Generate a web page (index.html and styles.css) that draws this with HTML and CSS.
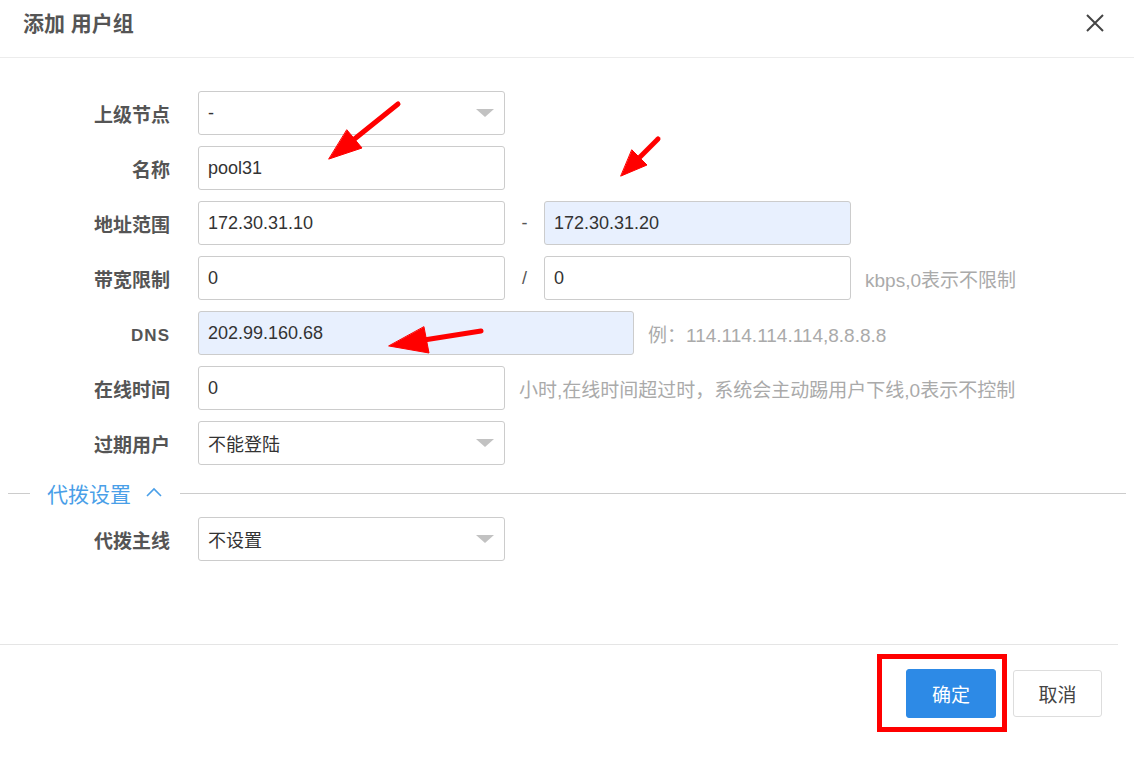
FILE: index.html
```html
<!DOCTYPE html>
<html lang="zh-CN">
<head>
    <meta charset="UTF-8">
    <meta name="viewport" content="width=device-width, initial-scale=1.0">
    <title>添加 用户组</title>
    <link rel="stylesheet" href="styles.css">
</head>
<body>
    <div class="dialog">
        <div class="dialog-header">
            <span class="dialog-title">添加 用户组</span>
            <svg class="close" width="20" height="20" viewBox="0 0 20 20">
                <path d="M2 2 L18 18 M18 2 L2 18" stroke="#444" stroke-width="2" fill="none"/>
            </svg>
        </div>

        <div class="dialog-body">
            <div class="form-row">
                <label class="form-label">上级节点</label>
                <div class="select"><span>-</span><i class="caret"></i></div>
            </div>
            <div class="form-row">
                <label class="form-label">名称</label>
                <input class="field" type="text" value="pool31">
            </div>
            <div class="form-row">
                <label class="form-label">地址范围</label>
                <input class="field" type="text" value="172.30.31.10">
                <span class="sep">-</span>
                <input class="field filled" type="text" value="172.30.31.20">
            </div>
            <div class="form-row">
                <label class="form-label">带宽限制</label>
                <input class="field" type="text" value="0">
                <span class="sep">/</span>
                <input class="field" type="text" value="0">
                <span class="hint">kbps,0表示不限制</span>
            </div>
            <div class="form-row">
                <label class="form-label label-latin">DNS</label>
                <input class="field field-wide filled" type="text" value="202.99.160.68">
                <span class="hint">例：114.114.114.114,8.8.8.8</span>
            </div>
            <div class="form-row">
                <label class="form-label">在线时间</label>
                <input class="field" type="text" value="0">
                <span class="hint">小时,在线时间超过时，系统会主动踢用户下线,0表示不控制</span>
            </div>
            <div class="form-row">
                <label class="form-label">过期用户</label>
                <div class="select"><span>不能登陆</span><i class="caret"></i></div>
            </div>

            <div class="section-divider">
                <span class="line-short"></span>
                <span class="section-title">代拨设置</span>
                <svg class="chevron" width="16" height="10" viewBox="0 0 16 10">
                    <polyline points="1,9 8,2 15,9" stroke="#4a9fe8" stroke-width="1.6" fill="none"/>
                </svg>
                <span class="line-long"></span>
            </div>

            <div class="form-row">
                <label class="form-label">代拨主线</label>
                <div class="select"><span>不设置</span><i class="caret"></i></div>
            </div>
        </div>

        <div class="dialog-footer">
            <button class="btn btn-primary">确定</button>
            <button class="btn">取消</button>
        </div>
    </div>

    <!-- annotation marks over the screenshot -->
    <div class="mark-box"></div>
    <svg class="marks" width="1134" height="766" viewBox="0 0 1134 766">
        <g stroke="#f00" stroke-width="5" stroke-linecap="round" fill="#f00">
            <line x1="398" y1="104" x2="352" y2="141"/>
            <polygon points="329,159 362,148 347,130" stroke-width="1"/>
            <line x1="658" y1="139" x2="638" y2="159"/>
            <polygon points="621,176 647,165 632,150" stroke-width="1"/>
            <line x1="481" y1="331" x2="424" y2="340"/>
            <polygon points="389,346 429,353 424,327" stroke-width="1"/>
        </g>
    </svg>
</body>
</html>
```

FILE: styles.css
```css
body {
    margin: 0;
    background: #fff;
    color: #333;
    font-family: "Liberation Sans", "Noto Sans CJK SC", sans-serif;
}

.dialog {
    width: 1134px;
    height: 766px;
}

.dialog-header {
    height: 58px;
    box-sizing: border-box;
    border-bottom: 1px solid #ececec;
    display: flex;
    justify-content: space-between;
    align-items: flex-start;
    padding: 0 29px 0 23px;
}

.dialog-title {
    line-height: 48px;
    font-size: 21px;
    font-weight: bold;
    color: #555;
}

.close {
    margin-top: 13px;
}

.dialog-body {
    height: 586px;
    box-sizing: border-box;
    padding-top: 33px;
    display: flex;
    flex-direction: column;
    gap: 11px;
}

.form-row {
    display: flex;
    align-items: center;
    height: 44px;
}

.form-label {
    width: 170px;
    margin-right: 28px;
    text-align: right;
    font-size: 19px;
    font-weight: bold;
    color: #555;
}

.label-latin {
    font-size: 17px;
    letter-spacing: 1px;
    padding-top: 5px;
}

.field, .select {
    width: 307px;
    height: 44px;
    box-sizing: border-box;
    border: 1px solid #ccc;
    border-radius: 3px;
    padding: 0 9px;
    font-family: inherit;
    font-size: 18px;
    color: #333;
    background: #fff;
    outline: none;
}

.field-wide {
    width: 436px;
}

.filled {
    background: #e8f0fe;
}

.select {
    display: flex;
    align-items: center;
    justify-content: space-between;
    padding-right: 10px;
}

.caret {
    width: 0;
    height: 0;
    border-left: 9px solid transparent;
    border-right: 9px solid transparent;
    border-top: 8px solid #c2c2c2;
}

.sep {
    width: 39px;
    text-align: center;
    font-size: 18px;
    color: #555;
}

.hint {
    margin-left: 14px;
    font-size: 19px;
    color: #aaa;
    white-space: nowrap;
}

.section-divider {
    height: 26px;
    margin-top: 4px;
    display: flex;
    align-items: center;
}

.line-short {
    width: 22px;
    height: 1px;
    margin-left: 8px;
    background: #ccc;
}

.section-title {
    margin-left: 17px;
    font-size: 21px;
    color: #4a9fe8;
}

.chevron {
    margin-left: 15px;
    margin-bottom: 3px;
}

.line-long {
    flex: 1;
    height: 1px;
    margin: 0 8px 0 18px;
    background: #ccc;
}

.dialog-footer {
    width: 1118px;
    box-sizing: border-box;
    border-top: 1px solid #e5e5e5;
    padding: 24px 16px 0 0;
    display: flex;
    justify-content: flex-end;
    align-items: center;
    gap: 17px;
}

.btn {
    width: 89px;
    height: 47px;
    border: 1px solid #ddd;
    border-radius: 3px;
    background: #fff;
    color: #444;
    font-family: inherit;
    font-size: 19px;
    cursor: pointer;
}

.btn-primary {
    width: 90px;
    height: 49px;
    border-color: #2d8ae6;
    background: #2d8ae6;
    color: #fff;
}

.mark-box {
    position: absolute;
    left: 877px;
    top: 654px;
    width: 130px;
    height: 78px;
    box-sizing: border-box;
    border: 5px solid #f00;
}

.marks {
    position: absolute;
    left: 0;
    top: 0;
    pointer-events: none;
}
```
